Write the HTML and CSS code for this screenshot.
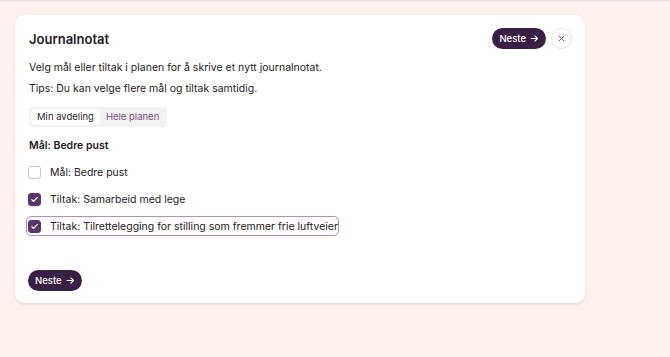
FILE: index.html
```html
<!DOCTYPE html>
<html lang="no">
<head>
<meta charset="utf-8">
<link rel="stylesheet" href="styles.css">
</head>
<body>
<div class="topline"></div>
<main class="page">
  <section class="card">
    <header class="card-head">
      <h1 class="title">Journalnotat</h1>
      <div class="head-actions">
        <button class="btn-primary">Neste
          <svg class="arrow" viewBox="0 0 12 12" width="9" height="9"><path d="M1.5 6h8.5M6.5 2.5 10 6l-3.5 3.5" fill="none" stroke="currentColor" stroke-width="1.5" stroke-linecap="round" stroke-linejoin="round"/></svg>
        </button>
        <button class="btn-close" aria-label="Lukk">
          <svg viewBox="0 0 10 10" width="7" height="7"><path d="M1.5 1.5l7 7M8.5 1.5l-7 7" stroke="currentColor" stroke-width="1.3" stroke-linecap="round"/></svg>
        </button>
      </div>
    </header>
    <p class="text first">Velg mål eller tiltak i planen for å skrive et nytt journalnotat.</p>
    <p class="text">Tips: Du kan velge flere mål og tiltak samtidig.</p>
    <div class="segmented">
      <span class="seg active">Min avdeling</span>
      <span class="seg">Hele planen</span>
    </div>
    <h2 class="group-title">Mål: Bedre pust</h2>
    <ul class="options">
      <li class="option"><span class="box"></span>Mål: Bedre pust</li>
      <li class="option"><span class="box checked"><svg viewBox="0 0 10 10" width="9" height="9"><path d="M2 5.2l2 2 4-4.4" fill="none" stroke="#fff" stroke-width="1.3" stroke-linecap="round" stroke-linejoin="round"/></svg></span>Tiltak: Samarbeid med lege</li>
      <li class="option focused"><span class="box checked"><svg viewBox="0 0 10 10" width="9" height="9"><path d="M2 5.2l2 2 4-4.4" fill="none" stroke="#fff" stroke-width="1.3" stroke-linecap="round" stroke-linejoin="round"/></svg></span>Tiltak: Tilrettelegging for stilling som fremmer frie luftveier</li>
    </ul>
    <div class="footer">
      <button class="btn-primary">Neste
        <svg class="arrow" viewBox="0 0 12 12" width="9" height="9"><path d="M1.5 6h8.5M6.5 2.5 10 6l-3.5 3.5" fill="none" stroke="currentColor" stroke-width="1.5" stroke-linecap="round" stroke-linejoin="round"/></svg>
      </button>
    </div>
  </section>
</main>
</body>
</html>
```
FILE: styles.css
```css
* { box-sizing: border-box; }
html, body { margin: 0; padding: 0; }
body {
  background: #fdf0ed;
  font-family: Inter, "Noto Sans", sans-serif;
  color: #1f1a22;
  height: 357px;
  overflow: hidden;
}
.topline {
  height: 1px;
  background: #ece3e2;
  box-shadow: 0 1px 2px rgba(0,0,0,0.05);
}
.page {
  padding: 14px 85px 0 15px;
}
.card {
  background: #fff;
  border-radius: 9px;
  box-shadow: 0 1px 3px rgba(80, 40, 40, 0.12);
  padding: 13px 13px 13px 14px;
  height: 288px;
}
.card-head {
  display: flex;
  align-items: center;
  justify-content: space-between;
  height: 21px;
}
.title {
  margin: 0;
  font-size: 13px;
  font-weight: 600;
}
.head-actions {
  display: flex;
  gap: 5px;
  align-items: center;
}
.btn-primary {
  display: inline-flex;
  align-items: center;
  gap: 4px;
  height: 21px;
  padding: 0 7px 0 7px;
  border: none;
  border-radius: 11px;
  background: #3a1f45;
  color: #fff;
  font-family: inherit;
  font-size: 9.5px;
  font-weight: 500;
}
.btn-close {
  width: 21px;
  height: 21px;
  border-radius: 50%;
  border: 1px solid #e6e1e6;
  background: #fff;
  color: #6b4a7a;
  display: flex;
  align-items: center;
  justify-content: center;
  padding: 0;
}
.text {
  margin: 0;
  font-size: 10.5px;
  line-height: 21px;
}
.text.first { margin-top: 8px; }
.segmented {
  display: inline-flex;
  margin-top: 8px;
  padding: 2px;
  background: #f5f2f3;
  border-radius: 4px;
}
.seg {
  font-size: 9.5px;
  padding: 0 6px;
  height: 16px;
  line-height: 16px;
  color: #7a4d8a;
  border-radius: 3px;
}
.seg.active {
  background: #fff;
  color: #2b2530;
  box-shadow: 0 0 1px rgba(0,0,0,0.12);
}
.group-title {
  margin: 11px 0 0;
  font-size: 10.5px;
  line-height: 15px;
  font-weight: 600;
}
.options {
  list-style: none;
  margin: 9px 0 0;
  padding: 0;
  display: flex;
  flex-direction: column;
  align-items: flex-start;
  gap: 7px;
}
.option {
  display: flex;
  align-items: center;
  gap: 9px;
  font-size: 10.5px;
  height: 20px;
  margin-left: -3px;
  padding: 0 0 0 1px;
  border: 1px solid transparent;
  border-radius: 5px;
}
.option.focused {
  border-color: #b58ec4;
}
.box {
  width: 13px;
  height: 13px;
  border: 1px solid #cbc2cc;
  border-radius: 3px;
  display: flex;
  align-items: center;
  justify-content: center;
  background: #fff;
}
.box.checked {
  background: #5a3568;
  border-color: #5a3568;
}
.footer {
  margin-top: 32px;
  margin-left: -1px;
}
```
